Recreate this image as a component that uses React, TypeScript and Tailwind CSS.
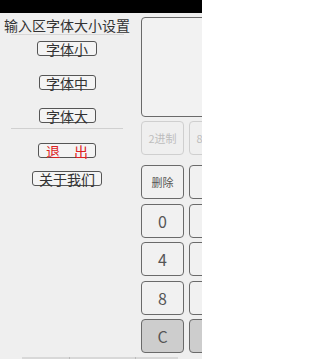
import React from 'react'

const font = { fontFamily: '"Noto Sans CJK SC", "Noto Sans", sans-serif' }

function SmallButton({
  children,
  width,
  red = false
}: {
  children: React.ReactNode
  width: string
  red?: boolean
}): React.JSX.Element {
  return (
    <div
      className={`flex h-[15px] items-center justify-center rounded-[3px] border border-[#555] bg-[#f4f4f4] text-[14px] leading-none ${width} ${
        red ? 'text-[#d22]' : 'text-[#333]'
      }`}
    >
      {children}
    </div>
  )
}

function KeyButton({
  label,
  dark = false,
  disabled = false
}: {
  label: string
  dark?: boolean
  disabled?: boolean
}): React.JSX.Element {
  let cls = 'border-[#6a6a6a] bg-[#f1f1f1] text-[#555]'
  if (dark) cls = 'border-[#6a6a6a] bg-[#cdcdcd] text-[#555]'
  if (disabled) cls = 'border-[#cfcfcf] bg-[#efefef] text-[#bdbdbd]'
  return (
    <div
      className={`flex h-[34px] w-[43px] shrink-0 items-center justify-center rounded-[4px] border-[1.5px] ${cls} ${
        label.length > 1 ? 'text-[11px]' : 'text-[16px]'
      }`}
    >
      {label}
    </div>
  )
}

function KeyRow({
  first,
  dark = false,
  disabled = false,
  className = ''
}: {
  first: string
  dark?: boolean
  disabled?: boolean
  className?: string
}): React.JSX.Element {
  return (
    <div className={`flex gap-[5px] ${className}`}>
      <KeyButton label={first} dark={dark} disabled={disabled} />
      <KeyButton label={disabled ? '8进制' : ''} dark={dark} disabled={disabled} />
    </div>
  )
}

export default function App(): React.JSX.Element {
  return (
    <div
      className="relative h-[359px] w-[202px] overflow-hidden bg-[#efefef]"
      style={font}
    >
      <div className="h-[13px] bg-black" />
      <div className="flex">
        {/* settings panel */}
        <div className="flex w-[134px] shrink-0 flex-col items-center">
          <div className="mt-[5px] text-[14px] leading-[15px] text-[#333]">
            输入区字体大小设置
          </div>
          <div className="mt-[1px] h-px w-[113px] bg-[#d6d6d6]" />
          <div className="mt-[6px]">
            <SmallButton width="w-[60px]">字体小</SmallButton>
          </div>
          <div className="mt-[19px]">
            <SmallButton width="w-[57px]">字体中</SmallButton>
          </div>
          <div className="mt-[18px]">
            <SmallButton width="w-[57px]">字体大</SmallButton>
          </div>
          <div className="mt-[5px] h-px w-[112px] bg-[#d0d0d0]" />
          <div className="mt-[14px]">
            <SmallButton width="w-[58px]" red>
              退　出
            </SmallButton>
          </div>
          <div className="mt-[13px]">
            <SmallButton width="w-[70px]">关于我们</SmallButton>
          </div>
        </div>

        {/* calculator panel */}
        <div className="ml-[7px] flex shrink-0 flex-col">
          <div className="mt-[4px] h-[100px] w-[120px] rounded-[4px] border-[1.5px] border-[#6a6a6a] bg-[#f2f2f2]" />
          <KeyRow first="2进制" disabled className="mt-[4px]" />
          <KeyRow first="删除" className="mt-[10px]" />
          <KeyRow first="0" className="mt-[5px]" />
          <KeyRow first="4" className="mt-[4px]" />
          <KeyRow first="8" className="mt-[5px]" />
          <KeyRow first="C" dark className="mt-[4px]" />
        </div>
      </div>

      {/* peeking tab strip at the bottom */}
      <div className="absolute bottom-0 left-[22px] flex h-[2px] w-[156px] bg-[#d8d8d8]">
        <div className="ml-[47px] w-px bg-[#bbb]" />
        <div className="ml-[65px] w-px bg-[#bbb]" />
      </div>
    </div>
  )
}
